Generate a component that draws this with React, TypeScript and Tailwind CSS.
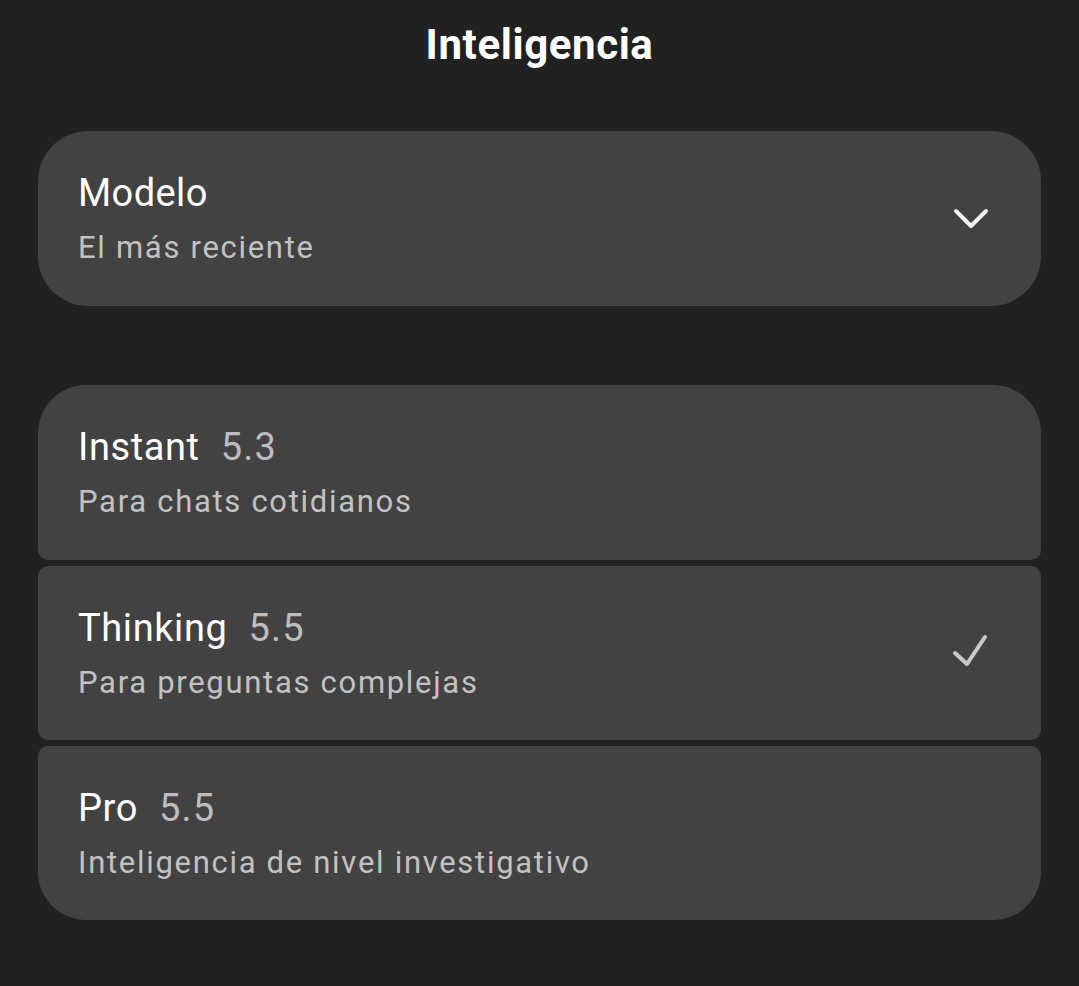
const models = [
  { name: "Instant", version: "5.3", desc: "Para chats cotidianos", selected: false },
  { name: "Thinking", version: "5.5", desc: "Para preguntas complejas", selected: true },
  { name: "Pro", version: "5.5", desc: "Inteligencia de nivel investigativo", selected: false },
]

const radii = [
  "rounded-t-[48px] rounded-b-[10px] h-[175px]",
  "rounded-[10px] h-[174px]",
  "rounded-t-[10px] rounded-b-[48px] h-[174px]",
]

export default function App() {
  return (
    <div
      className="min-h-screen bg-[#212121] px-[38px] text-white"
      style={{ fontFamily: "Roboto, 'Noto Sans', sans-serif" }}
    >
      <h1 className="flex h-[90px] items-center justify-center text-[42px] font-bold leading-none tracking-[0.6px]">
        Inteligencia
      </h1>

      <div className="mt-[41px] flex h-[175px] items-center justify-between rounded-[50px] bg-[#424242] pl-[40px] pr-[50px]">
        <div className="flex flex-col">
          <span className="text-[38px] leading-[48px] tracking-[0.4px]">Modelo</span>
          <span className="mt-[11px] text-[31px] leading-[40px] tracking-[1.7px] text-[#c2c2c2]">
            El más reciente
          </span>
        </div>
        <svg width="40" height="26" viewBox="0 0 40 26" fill="none">
          <polyline
            points="5,5 20,20 35,5"
            stroke="#f2f2f2"
            strokeWidth="4"
            strokeLinecap="round"
            strokeLinejoin="round"
          />
        </svg>
      </div>

      <div className="mt-[79px] flex flex-col gap-[6px]">
        {models.map((m, i) => (
          <div
            key={m.name}
            className={`flex items-center justify-between bg-[#424242] pl-[40px] pr-[50px] ${radii[i]}`}
          >
            <div className="flex flex-col">
              <div className="flex items-baseline gap-[21px] leading-[48px]">
                <span className="text-[38px] tracking-[0.6px]">{m.name}</span>
                <span className="text-[38px] tracking-[1.2px] text-[#bdbdbd]">{m.version}</span>
              </div>
              <span className="mt-[11px] text-[31px] leading-[40px] tracking-[1.7px] text-[#c2c2c2]">
                {m.desc}
              </span>
            </div>
            {m.selected && (
              <svg width="40" height="40" viewBox="0 0 40 40" fill="none">
                <polyline
                  points="4,20 16,31 34,4"
                  stroke="#c9c9c9"
                  strokeWidth="4"
                  strokeLinecap="round"
                  strokeLinejoin="round"
                />
              </svg>
            )}
          </div>
        ))}
      </div>
    </div>
  )
}
